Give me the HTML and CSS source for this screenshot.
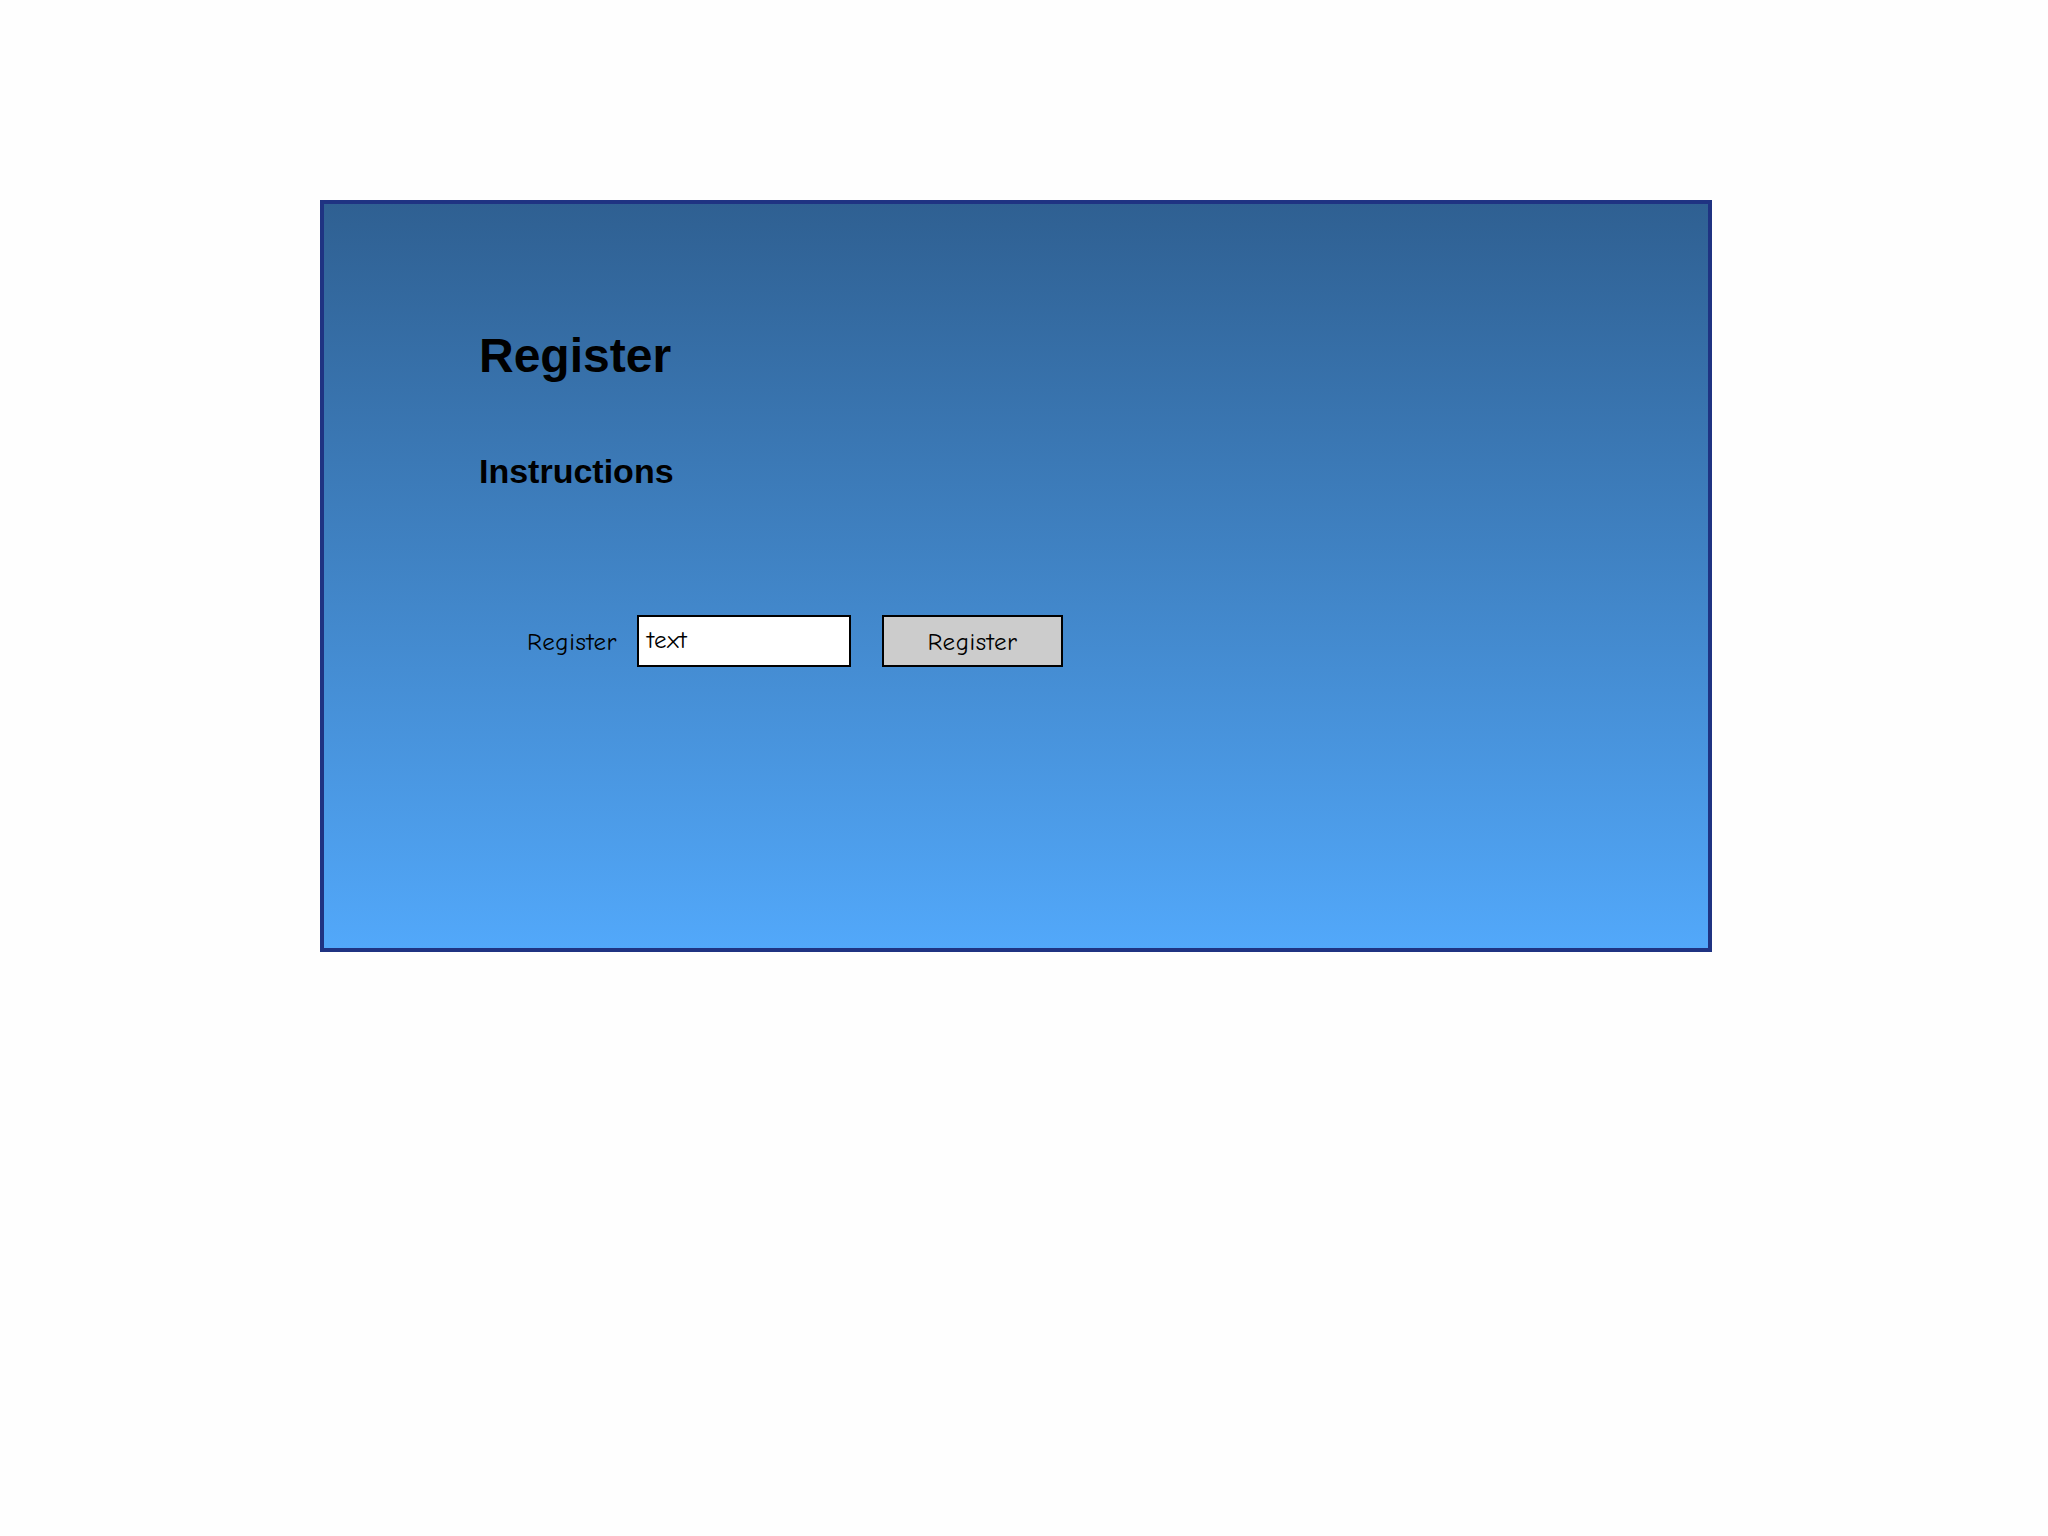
FILE: index.html
```html
<!DOCTYPE html>
<html>
<head>
<meta charset="utf-8">
<link rel="stylesheet" href="styles.css">
</head>
<body>
<div class="page">
  <div class="panel">
    <h1 class="title">Register</h1>
    <h2 class="subtitle">Instructions</h2>
    <div class="form-row">
      <span class="label">Register</span>
      <div class="input">text</div>
      <div class="button">Register</div>
    </div>
  </div>
</div>
</body>
</html>
```
FILE: styles.css
```css
html, body {
  margin: 0;
  padding: 0;
  background: #fefefe;
}
.page {
  padding: 200px 0 0 320px;
}
.panel {
  box-sizing: border-box;
  width: 1392px;
  height: 752px;
  border: 4px solid #1f3382;
  background: linear-gradient(to bottom, #2f6092, #52a8fa);
  padding: 128px 0 0 155px;
}
.title {
  margin: 0;
  font-family: "Liberation Sans", Arial, sans-serif;
  font-weight: bold;
  font-size: 48px;
  line-height: 48px;
  color: #000;
}
.subtitle {
  margin: 74px 0 0 0;
  font-family: "Liberation Sans", Arial, sans-serif;
  font-weight: bold;
  font-size: 34px;
  line-height: 34px;
  color: #000;
}
.form-row {
  display: flex;
  align-items: center;
  margin: 127px 0 0 48px;
  font-family: "Comic Sans MS", "Comic Neue", "Noto Sans", sans-serif;
  font-size: 25px;
  color: #000;
}
.label {
  flex: none;
  width: 110px;
  letter-spacing: 0.6px;
}
.input {
  box-sizing: border-box;
  width: 214px;
  height: 52px;
  border: 2px solid #000;
  background: #fff;
  padding: 0 8px;
  display: flex;
  align-items: center;
  padding-bottom: 4px;
  letter-spacing: 0.6px;
}
.button {
  box-sizing: border-box;
  width: 181px;
  height: 52px;
  margin-left: 31px;
  border: 2px solid #000;
  background: #cccccc;
  display: flex;
  align-items: center;
  justify-content: center;
  letter-spacing: 0.6px;
}
```
